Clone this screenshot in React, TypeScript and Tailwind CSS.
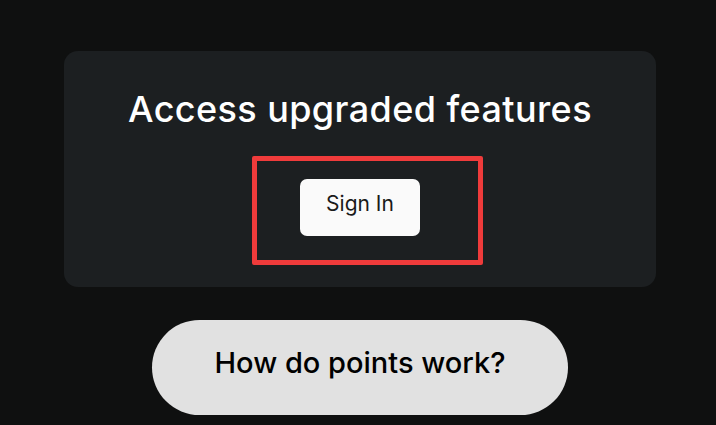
export default function App() {
  return (
    <div className="w-[716px] h-[425px] overflow-hidden bg-[#0f1010] flex flex-col items-center pl-[4px] font-['Inter',sans-serif]">
      <div className="relative mt-[51px] w-[592px] h-[236px] rounded-[14px] bg-[#1c1f21] flex flex-col items-center">
        <h1 className="mt-[36px] text-[36px] leading-[44px] text-white font-medium tracking-[0.4px]">
          Access upgraded features
        </h1>
        <button className="mt-[48px] w-[120px] h-[57px] pb-[8px] rounded-[7px] bg-[#fafafa] text-[#1a1a1a] text-[21px]">
          Sign In
        </button>
        {/* highlight annotation */}
        <div className="absolute left-[188px] top-[105px] w-[231px] h-[109px] border-[5px] border-[#ef3b3b] rounded-[2px]" />
      </div>
      <button className="mt-[33px] w-[416px] h-[95px] pb-[9px] rounded-full bg-[#e1e1e1] text-black text-[29px] font-medium">
        How do points work?
      </button>
    </div>
  );
}
